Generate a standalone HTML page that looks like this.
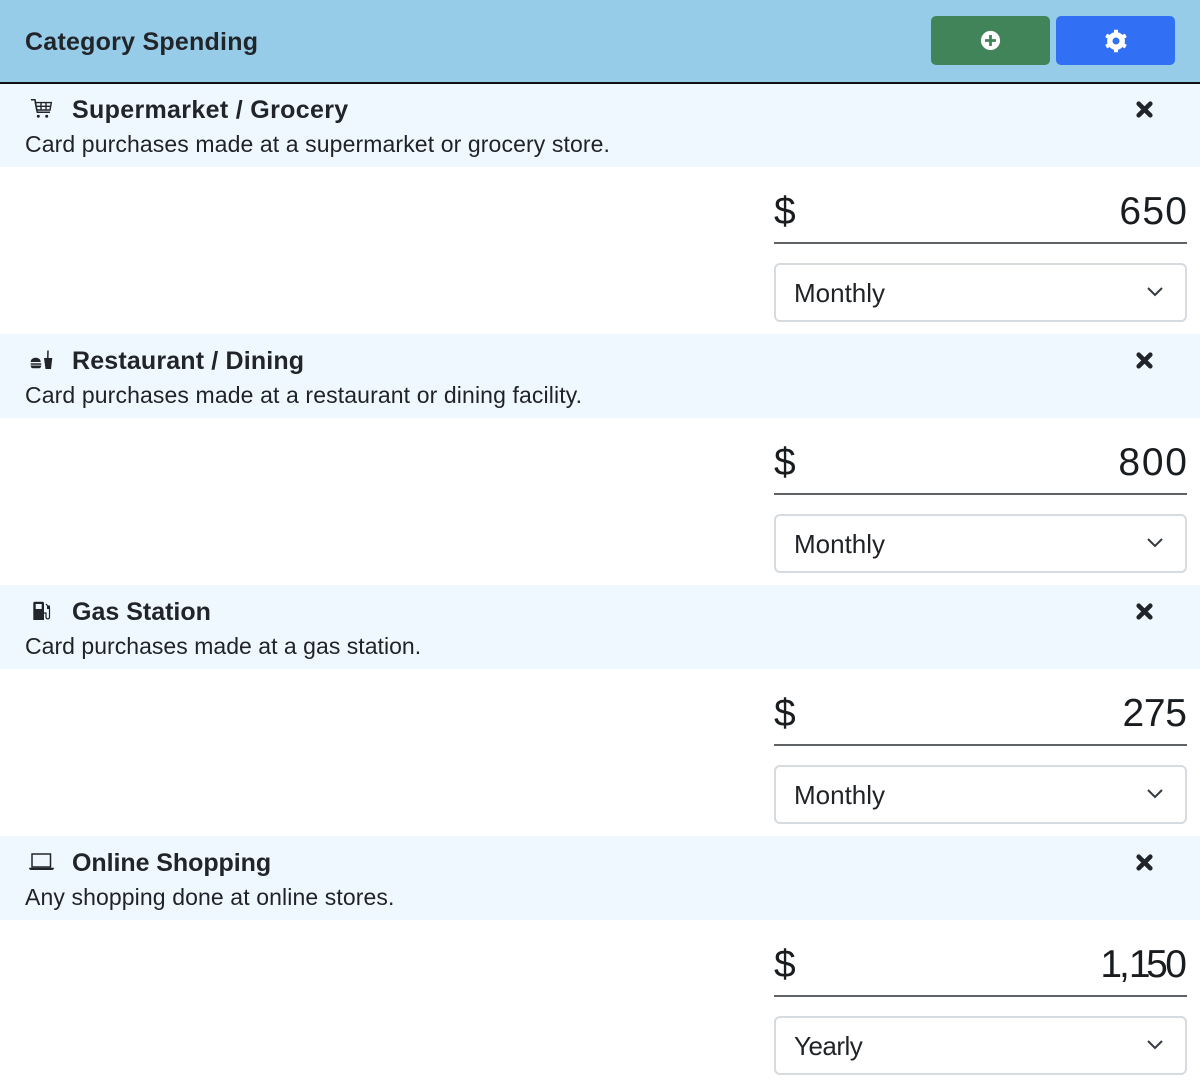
<!DOCTYPE html>
<html><head><meta charset="utf-8"><style>
html,body{margin:0;padding:0;background:#fff}
body{width:1200px;height:1086px;position:relative;overflow:hidden;font-family:"Liberation Sans",sans-serif;color:#212529}
div,svg{position:absolute}
.hd{left:0;width:1200px;height:83.5px;background:#f0f8ff}
.t{left:72px;font-size:25px;font-weight:700;line-height:32px;white-space:nowrap}
.d{left:25px;font-size:23px;line-height:30px;white-space:nowrap;color:#1f2226}
.dl{left:774px;font-size:39px;line-height:50px;color:#1a1d20}
.v{font-size:39px;line-height:50px;white-space:nowrap;color:#1a1d20}
.ln{left:774px;width:413px;height:1.5px;background:#606366}
.s{left:774px;width:413px;height:58.5px;box-sizing:border-box;border:2px solid #d6dbe0;border-radius:6px;background:#fff;font-size:26px;line-height:56px;padding-left:18px;color:#1f2226}
.x{left:1135px}
</style></head><body>
<div style="left:0;top:0;width:1200px;height:82px;background:#97cce9"></div>
<div style="left:0;top:82px;width:1200px;height:1.500px;background:#111"></div>
<div style="left:25px;top:26px;font-size:25px;font-weight:700;line-height:32px;letter-spacing:.24px">Category Spending</div>
<div style="left:931px;top:16px;width:119px;height:49px;background:#41845a;border-radius:5px"></div>
<div style="left:1056px;top:16px;width:119px;height:49px;background:#316ff5;border-radius:5px"></div>
<svg style="left:980px;top:30px" width="21" height="21" viewBox="0 0 21 21"><circle cx="10.500" cy="10.500" r="9.600" fill="#fff"/><path d="M10.500 5v11M5 10.500h11" stroke="#41845a" stroke-width="2.800"/></svg>
<svg style="left:1104px;top:28.500px" width="24" height="24" viewBox="0 0 24 24"><circle cx="12" cy="12" r="6.200" fill="none" stroke="#fff" stroke-width="5.400"/><path d="M12 .7v4M12 19.300v4M2.200 6.350l3.500 2M18.300 15.650l3.500 2M2.200 17.650l3.500-2M18.300 8.350l3.500-2" stroke="#fff" stroke-width="4"/></svg>

<div class="hd" style="top:83.500px"></div>
<svg style="left:30px;top:98px" width="23" height="21" viewBox="0 0 23 21"><path d="M1 1.700h4L7.300 14.300H20" fill="none" stroke="#212529" stroke-width="1.500"/><path d="M5.300 4.600h16l-1.300 7.400H6.700zM11 4.600V12M16 4.600V12M6 8.300h15" fill="none" stroke="#212529" stroke-width="1.400"/><circle cx="8.300" cy="18.300" r="1.500" fill="#212529"/><circle cx="16.700" cy="18.300" r="1.500" fill="#212529"/></svg>
<div class="t" style="top:94px;letter-spacing:.33px">Supermarket / Grocery</div>
<div class="d" style="top:129px;letter-spacing:.11px">Card purchases made at a supermarket or grocery store.</div>
<svg class="x" style="top:100px" width="19" height="19" viewBox="0 0 19 19"><path d="M3.700 3.700l11.600 11.600M15.300 3.700L3.700 15.300" stroke="#212529" stroke-width="4.600" stroke-linecap="round"/></svg>
<div class="dl" style="top:187px">$</div><div class="v" style="top:187px;right:11.700px;letter-spacing:1.300px">650</div><div class="ln" style="top:242px"></div>
<div class="s" style="top:263px">Monthly</div>
<svg style="left:1146px;top:286px" width="18" height="12" viewBox="0 0 18 12"><path d="M2 2l7 7 7-7" fill="none" stroke="#343a40" stroke-width="2"/></svg>

<div class="hd" style="top:334px"></div>
<svg style="left:30px;top:350px" width="23" height="20" viewBox="0 0 23 20"><path d="M.7 12c0-3 2.500-4.300 5-4.300s5 1.300 5 4.300zM.7 13.200h10.500v1.500H.7zM.7 15.500h10.500c0 1.800-1 2.800-2.500 2.800H3.200c-1.500 0-2.500-1-2.500-2.800z" fill="#212529"/><path d="M14 8h8.300l-1.300 11h-5.500z" fill="#212529"/><path d="M17.800 8l.2-7.500" fill="none" stroke="#212529" stroke-width="1.500"/></svg>
<div class="t" style="top:345px;letter-spacing:.16px">Restaurant / Dining</div>
<div class="d" style="top:380px;letter-spacing:.12px">Card purchases made at a restaurant or dining facility.</div>
<svg class="x" style="top:351px" width="19" height="19" viewBox="0 0 19 19"><path d="M3.700 3.700l11.600 11.600M15.300 3.700L3.700 15.300" stroke="#212529" stroke-width="4.600" stroke-linecap="round"/></svg>
<div class="dl" style="top:438px">$</div><div class="v" style="top:438px;right:11.200px;letter-spacing:1.800px">800</div><div class="ln" style="top:493px"></div>
<div class="s" style="top:514px">Monthly</div>
<svg style="left:1146px;top:537px" width="18" height="12" viewBox="0 0 18 12"><path d="M2 2l7 7 7-7" fill="none" stroke="#343a40" stroke-width="2"/></svg>

<div class="hd" style="top:585px"></div>
<svg style="left:32px;top:600px" width="19" height="21" viewBox="0 0 19 21"><path fill-rule="evenodd" d="M1.300 3.200c0-1 .7-1.500 1.500-1.500h7.700c.8 0 1.500.5 1.500 1.500V20H1.300zM3.700 4v5h6V4z" fill="#212529"/><path d="M12 13h2v4c0 2.500 3.500 2.500 3.500 0V8L14 4" fill="none" stroke="#212529" stroke-width="1.200"/><path d="M15 5.500h3V9h-3z" fill="#212529"/></svg>
<div class="t" style="top:596px">Gas Station</div>
<div class="d" style="top:631px;letter-spacing:.03px">Card purchases made at a gas station.</div>
<svg class="x" style="top:602px" width="19" height="19" viewBox="0 0 19 19"><path d="M3.700 3.700l11.600 11.600M15.300 3.700L3.700 15.300" stroke="#212529" stroke-width="4.600" stroke-linecap="round"/></svg>
<div class="dl" style="top:689px">$</div><div class="v" style="top:689px;right:13.300px;letter-spacing:-.3px">275</div><div class="ln" style="top:744px"></div>
<div class="s" style="top:765px">Monthly</div>
<svg style="left:1146px;top:788px" width="18" height="12" viewBox="0 0 18 12"><path d="M2 2l7 7 7-7" fill="none" stroke="#343a40" stroke-width="2"/></svg>

<div class="hd" style="top:836px"></div>
<svg style="left:29px;top:852px" width="26" height="19" viewBox="0 0 26 19"><path d="M3 2h18.500v13H3z" fill="none" stroke="#212529" stroke-width="1.500"/><path d="M0 15.700h25c0 1.400-.8 2.300-2 2.300H2c-1.200 0-2-.9-2-2.300z" fill="#212529"/></svg>
<div class="t" style="top:847px;letter-spacing:-.06px">Online Shopping</div>
<div class="d" style="top:882px;letter-spacing:.11px">Any shopping done at online stores.</div>
<svg class="x" style="top:853px" width="19" height="19" viewBox="0 0 19 19"><path d="M3.700 3.700l11.600 11.600M15.300 3.700L3.700 15.300" stroke="#212529" stroke-width="4.600" stroke-linecap="round"/></svg>
<div class="dl" style="top:940px">$</div><div class="v" style="top:940px;right:13px"><span style="letter-spacing:-3px">1</span><span style="letter-spacing:-1px">,</span><span style="letter-spacing:-4.500px">1</span><span style="letter-spacing:-2.500px">5</span>0</div><div class="ln" style="top:995px"></div>
<div class="s" style="top:1016px;letter-spacing:-.5px">Yearly</div>
<svg style="left:1146px;top:1039px" width="18" height="12" viewBox="0 0 18 12"><path d="M2 2l7 7 7-7" fill="none" stroke="#343a40" stroke-width="2"/></svg>
</body></html>
